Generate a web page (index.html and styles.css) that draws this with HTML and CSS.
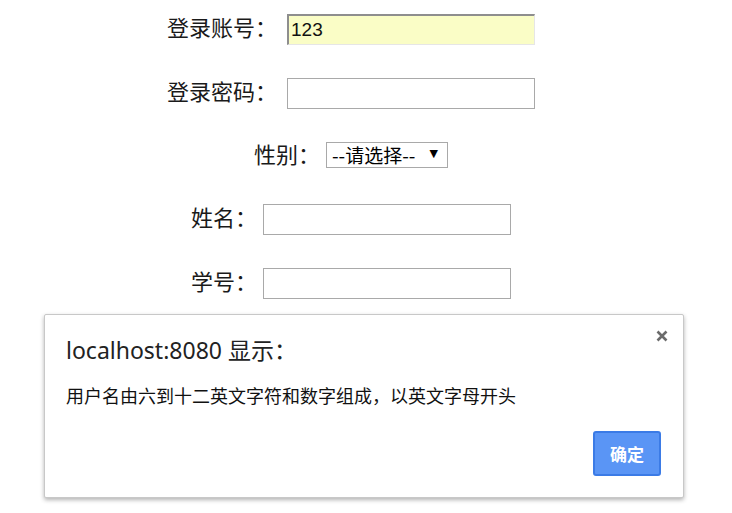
FILE: index.html
```html
<!DOCTYPE html>
<html lang="zh-CN">
<head>
<meta charset="utf-8">
<title>注册</title>
<link rel="stylesheet" href="styles.css">
</head>
<body>
<form class="form">
  <div class="row row-wide">
    <label class="label">登录账号：</label>
    <input class="field field-filled" type="text" value="123">
  </div>
  <div class="row row-wide">
    <label class="label">登录密码：</label>
    <input class="field" type="password">
  </div>
  <div class="row row-select">
    <label class="label">性别：</label>
    <div class="select"><span class="select-text">--请选择--</span><span class="select-arrow">▼</span></div>
  </div>
  <div class="row">
    <label class="label">姓名：</label>
    <input class="field" type="text">
  </div>
  <div class="row">
    <label class="label">学号：</label>
    <input class="field" type="text">
  </div>
</form>

<div class="dialog">
  <div class="dialog-head">
    <div class="dialog-title">localhost:8080 显示：</div>
    <svg class="dialog-close" width="12" height="12" viewBox="0 0 12 12" aria-label="关闭">
      <path d="M1.5 1.5 L10.5 10.5 M10.5 1.5 L1.5 10.5" stroke="#6b6b6b" stroke-width="2.6" stroke-linecap="butt"/>
    </svg>
  </div>
  <div class="dialog-msg">用户名由六到十二英文字符和数字组成，以英文字母开头</div>
  <div class="dialog-foot">
    <button class="btn" type="button">确定</button>
  </div>
</div>
</body>
</html>
```

FILE: styles.css
```css
html, body {
  margin: 0;
  padding: 0;
  background: #fff;
}
body {
  width: 732px;
  height: 513px;
  overflow: hidden;
  position: relative;
  font-family: "Noto Sans CJK SC", "Noto Sans", sans-serif;
  color: #111;
}
.form {
  padding-top: 14px;
  padding-right: 30px;
  display: flex;
  flex-direction: column;
}
.row {
  display: flex;
  justify-content: center;
  align-items: center;
  gap: 6px;
  height: 31px;
  margin-bottom: 33px;
}
.row-wide { gap: 10px; }
.row-select {
  height: 32px;
  margin-top: -3px;
  margin-bottom: 33px;
}
.label {
  font-size: 22px;
  line-height: 31px;
  padding-bottom: 6px;
  white-space: nowrap;
  color: #1a1a1a;
}
.row-select .label { padding-bottom: 4px; }
.field {
  box-sizing: border-box;
  width: 248px;
  height: 31px;
  margin: 0;
  border: 1px solid #a9a9a9;
  background: #fff;
  padding: 0 3px;
  font-family: "Liberation Sans", Arial, sans-serif;
  font-size: 19px;
  color: #111;
  outline: none;
}
.field-filled {
  background: #fafdc6;
  border-top: 2px solid #8e8e8e;
  border-left: 2px solid #8e8e8e;
  border-right: 1px solid #e6e6e6;
  border-bottom: 1px solid #e6e6e6;
  padding: 0 2px;
}
.select {
  box-sizing: border-box;
  width: 122px;
  height: 26px;
  border: 1px solid #a9a9a9;
  display: flex;
  align-items: center;
  justify-content: space-between;
  padding: 0 9px 0 5px;
  font-size: 19px;
  color: #000;
}
.select-text { line-height: 24px; }
.select-arrow {
  font-family: "DejaVu Sans", sans-serif;
  font-size: 11px;
  margin-top: -4px;
}

.dialog {
  position: absolute;
  left: 44px;
  top: 314px;
  width: 640px;
  height: 184px;
  box-sizing: border-box;
  background: #fff;
  border: 1px solid #c8c8c8;
  border-radius: 2px;
  box-shadow: 0 2px 4px rgba(0, 0, 0, 0.3);
  padding: 18px 21px 0 21px;
  display: flex;
  flex-direction: column;
}
.dialog-head {
  display: flex;
  justify-content: space-between;
  align-items: flex-start;
}
.dialog-title {
  font-family: "Noto Sans", "Noto Sans CJK SC", sans-serif;
  font-size: 23px;
  line-height: 34px;
  color: #222;
}
.dialog-close {
  display: block;
  margin-top: -3px;
  margin-right: -6px;
}
.dialog-msg {
  margin-top: 16px;
  font-size: 18px;
  line-height: 24px;
  color: #111;
}
.dialog-foot {
  display: flex;
  justify-content: flex-end;
  margin-top: 24px;
  margin-right: 1px;
}
.btn {
  width: 68px;
  height: 45px;
  box-sizing: border-box;
  background: #5a95f5;
  border: 2px solid #3b7be6;
  border-radius: 3px;
  color: #fff;
  font-family: "Noto Sans CJK SC", sans-serif;
  font-weight: bold;
  font-size: 17px;
  padding: 0;
}
```
